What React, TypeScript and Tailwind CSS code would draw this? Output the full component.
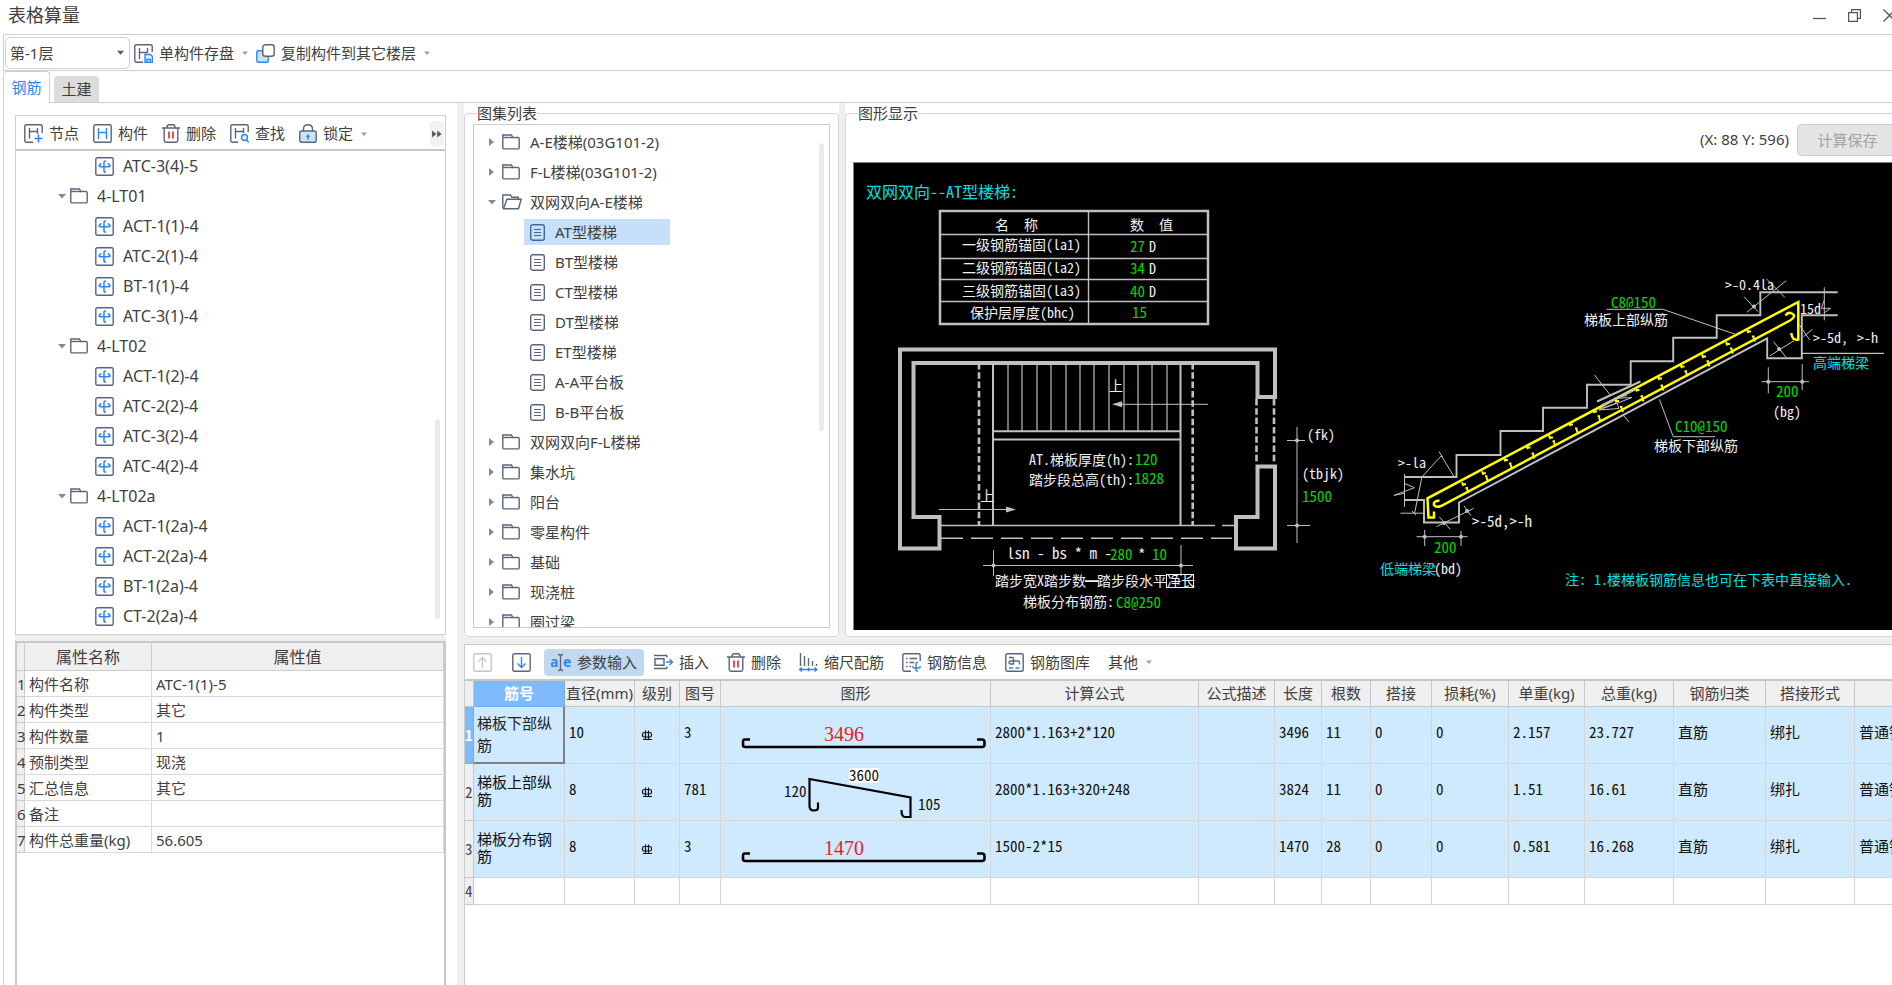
import React from "react";

const SLATE = "#5b6478";
const BLUE = "#2f86ea";

type TreeNode = { label: string; folder: boolean };

const COMPONENT_TREE: TreeNode[] = [
  { label: "ATC-3(4)-5", folder: false },
  { label: "4-LT01", folder: true },
  { label: "ACT-1(1)-4", folder: false },
  { label: "ATC-2(1)-4", folder: false },
  { label: "BT-1(1)-4", folder: false },
  { label: "ATC-3(1)-4", folder: false },
  { label: "4-LT02", folder: true },
  { label: "ACT-1(2)-4", folder: false },
  { label: "ATC-2(2)-4", folder: false },
  { label: "ATC-3(2)-4", folder: false },
  { label: "ATC-4(2)-4", folder: false },
  { label: "4-LT02a", folder: true },
  { label: "ACT-1(2a)-4", folder: false },
  { label: "ACT-2(2a)-4", folder: false },
  { label: "BT-1(2a)-4", folder: false },
  { label: "CT-2(2a)-4", folder: false },
];

type AtlasNode = { label: string; kind: "closed" | "open" | "leaf"; selected?: boolean };

const ATLAS: AtlasNode[] = [
  { label: "A-E楼梯(03G101-2)", kind: "closed" },
  { label: "F-L楼梯(03G101-2)", kind: "closed" },
  { label: "双网双向A-E楼梯", kind: "open" },
  { label: "AT型楼梯", kind: "leaf", selected: true },
  { label: "BT型楼梯", kind: "leaf" },
  { label: "CT型楼梯", kind: "leaf" },
  { label: "DT型楼梯", kind: "leaf" },
  { label: "ET型楼梯", kind: "leaf" },
  { label: "A-A平台板", kind: "leaf" },
  { label: "B-B平台板", kind: "leaf" },
  { label: "双网双向F-L楼梯", kind: "closed" },
  { label: "集水坑", kind: "closed" },
  { label: "阳台", kind: "closed" },
  { label: "零星构件", kind: "closed" },
  { label: "基础", kind: "closed" },
  { label: "现浇桩", kind: "closed" },
  { label: "圈过梁", kind: "closed" },
];

const PROPERTIES: [string, string][] = [
  ["构件名称", "ATC-1(1)-5"],
  ["构件类型", "其它"],
  ["构件数量", "1"],
  ["预制类型", "现浇"],
  ["汇总信息", "其它"],
  ["备注", ""],
  ["构件总重量(kg)", "56.605"],
];

/* ---------- icons ---------- */

function Caret({ dir = "down", color = "#8a8a8a", size = 8 }: { dir?: "down" | "right"; color?: string; size?: number }) {
  return (
    <svg width={size} height={size} viewBox="0 0 8 8" fill={color} className="shrink-0">
      {dir === "down" ? <path d="M0 2h8L4 6.5z" /> : <path d="M1 0v8l5-4z" />}
    </svg>
  );
}

function Icon({ children, w = 19 }: { children: React.ReactNode; w?: number }) {
  return (
    <svg width={w} height="19" viewBox={`0 0 ${w} 19`} fill="none" stroke={SLATE} strokeWidth="1.4" className="shrink-0">
      {children}
    </svg>
  );
}

const SaveIcon = () => (
  <Icon>
    <path d="M18.200 8V2.200Q18.200.8 16.800.8H2.200Q.8.8.8 2.200v14.600q0 1.400 1.400 1.400H9" />
    <path d="M5.500 4v11M13.500 4v5M5.500 8.500h8" />
    <path d="M11 10.500h5.500l2 2v6H11z" fill="#e3effc" stroke={BLUE} />
    <path d="M13 18v-2.500h3.500V18" stroke={BLUE} />
  </Icon>
);

const CopyIcon = () => (
  <Icon>
    <rect x="0.800" y="6.800" width="11.500" height="11.400" rx="1.500" fill="#c9e0fb" stroke={BLUE} />
    <rect x="6.800" y="0.800" width="11.400" height="11.400" rx="2.500" fill="#fff" />
  </Icon>
);

const NodeIcon = () => (
  <Icon>
    <path d="M18.200 9V2.200Q18.200.8 16.800.8H2.200Q.8.8.8 2.200v14.600q0 1.400 1.400 1.400H9" />
    <path d="M5.500 4v10.500M13.500 4v6M5.500 7.500h8" />
    <path d="M14.500 10.500v8M10.500 14.500h8" stroke={BLUE} strokeWidth="1.600" />
  </Icon>
);

const MemberIcon = () => (
  <Icon>
    <rect x="0.800" y="0.800" width="17.400" height="17.400" rx="1.500" />
    <path d="M5.500 4v11M13.500 4v11M5.500 8.500h8" stroke={BLUE} />
  </Icon>
);

const TrashIcon = () => (
  <Icon w={18}>
    <path d="M0 4h18M5 3.500Q5 .8 7 .8h4q2 0 2 2.700M2.200 4v12.500q0 1.700 1.700 1.700h10.200q1.700 0 1.700-1.700V4" />
    <path d="M7 7.500v7M11 7.500v7" stroke="#e5252b" strokeWidth="1.600" />
  </Icon>
);

const FindIcon = () => (
  <Icon>
    <path d="M18.200 8V2.200Q18.200.8 16.800.8H2.200Q.8.8.8 2.200v14.600q0 1.400 1.400 1.400H8" />
    <path d="M5.500 4v10.500M13.500 4v5M5.500 7.500h8" />
    <circle cx="14.500" cy="13.500" r="3" fill="#e3effc" stroke={BLUE} />
    <path d="M16.500 16l2.300 2.500" stroke={BLUE} />
  </Icon>
);

const LockIcon = () => (
  <Icon w={18}>
    <path d="M4.500 7V5Q4.500.8 9 .8T13.500 5v2" />
    <rect x="0.800" y="7" width="16.400" height="11.200" rx="1.500" fill="#cfe2fb" />
    <path d="M9 10l2.200 3H9.800v2.500H8.200V13H6.800z" fill={BLUE} stroke="none" />
  </Icon>
);

const ComponentIcon = () => (
  <Icon>
    <rect x="0.800" y="0.800" width="17.400" height="17.400" rx="1.500" />
    <path
      d="M11 4.300Q9 3.300 9 5.500V14q0 1.600 2 .8M4.500 7.800q-1.200 2 .8 2h8.400q2 0 .8-2.300M6.300 6.500Q4.300 7.300 4.600 9M12.800 6.500q1.900.8 1.700 2.500"
      stroke={BLUE}
      strokeWidth="1.500"
    />
  </Icon>
);

const FolderIcon = () => (
  <svg width="18" height="16" viewBox="0 0 18 16" fill="none" stroke={SLATE} strokeWidth="1.400" className="shrink-0">
    <path d="M.8 1h8.700l1.200 2.500H16q1.200 0 1.200 1.200v9q0 1.200-1.200 1.200H2Q.8 14.900.8 13.700z" />
    <path d="M1 3.500h10" />
  </svg>
);

const FolderOpenIcon = () => (
  <svg width="20" height="16" viewBox="0 0 20 16" fill="none" stroke={SLATE} strokeWidth="1.400" className="shrink-0">
    <path d="M1.500 14.500L.8 13V1h7.500l1.700 2.300h6.200v2" />
    <path d="M5 5.300h14.200l-2.700 9.500H1.500z" />
  </svg>
);

const DocIcon = ({ active }: { active?: boolean }) => (
  <svg width="15" height="17" viewBox="0 0 15 17" fill="none" stroke={active ? "#3d6a9c" : SLATE} strokeWidth="1.400" className="shrink-0">
    <rect x="0.700" y="0.800" width="13.600" height="15.400" rx="2" />
    <path d="M4 5.500h7M4 8.500h7M4 11.500h7" strokeWidth="1.200" />
  </svg>
);

/* ---------- shared pieces ---------- */

function ToolButton({ icon, label, caret, active }: { icon?: React.ReactNode; label: string; caret?: boolean; active?: boolean }) {
  return (
    <button
      type="button"
      className={
        active
          ? "flex h-[27px] items-center gap-1.5 rounded bg-[#c1d8f1] px-[7px] whitespace-nowrap"
          : "flex h-[27px] items-center gap-1.5 whitespace-nowrap"
      }
    >
      {icon}
      <span>{label}</span>
      {caret && (
        <span className="ml-0.5">
          <Caret color="#a0a0a0" size={6} />
        </span>
      )}
    </button>
  );
}

function ComponentPanel() {
  return (
    <section className="relative h-[520px] shrink-0 overflow-hidden border border-[#cdcfd0] bg-white">
      <div className="flex h-[35px] items-center border-b-2 border-[#c4c7c8] pt-0.5 pl-2">
        <div className="flex gap-[14px]">
          <ToolButton icon={<NodeIcon />} label="节点" />
          <ToolButton icon={<MemberIcon />} label="构件" />
          <ToolButton icon={<TrashIcon />} label="删除" />
          <ToolButton icon={<FindIcon />} label="查找" />
          <ToolButton icon={<LockIcon />} label="锁定" caret />
        </div>
        <button type="button" aria-label="更多" className="mr-px ml-auto flex h-[25px] w-[14px] items-center justify-center rounded bg-[#f2f2f2]">
          <svg width="10" height="8" viewBox="0 0 10 8" fill="#555b68">
            <path d="M0 .5v7L4.500 4zM5.200.5v7L9.700 4z" />
          </svg>
        </button>
      </div>
      <ul className="text-[16px]">
        {COMPONENT_TREE.map((n) => (
          <li key={n.label}>
            <button
              type="button"
              className={n.folder ? "flex h-[30px] w-full items-center pl-[42px]" : "flex h-[30px] w-full items-center pl-[79px]"}
            >
              {n.folder ? (
                <>
                  <Caret />
                  <span className="mr-[9px] ml-1">
                    <FolderIcon />
                  </span>
                </>
              ) : (
                <span className="mr-[9px]">
                  <ComponentIcon />
                </span>
              )}
              <span>{n.label}</span>
            </button>
          </li>
        ))}
      </ul>
      <div className="absolute top-[303px] right-[5px] h-[200px] w-[5px] rounded-full bg-[#ebebeb]" />
    </section>
  );
}

function PropertyPanel() {
  return (
    <section className="min-h-0 flex-1 border-2 border-b-0 border-[#c6c8ca] bg-white">
      <table className="w-full table-fixed border-separate border-spacing-0">
        <colgroup>
          <col className="w-[8px]" />
          <col className="w-[127px]" />
          <col />
        </colgroup>
        <thead>
          <tr className="h-[28px] bg-[#efefef] text-[16px] leading-6">
            <th className="border-r border-b border-[#c9cbcd] p-0" />
            <th className="border-r border-b border-[#c9cbcd] p-0 font-normal">属性名称</th>
            <th className="border-r border-b border-[#c9cbcd] p-0 font-normal">属性值</th>
          </tr>
        </thead>
        <tbody>
          {PROPERTIES.map(([name, value], i) => (
            <tr key={name} className="h-[26px] leading-6">
              <th className="border-r border-b border-[#c9cbcd] bg-[#efefef] p-0 text-left font-normal">{i + 1}</th>
              <td className="border-r border-b border-[#d9d9d9] p-0 pl-1">{name}</td>
              <td className="border-r border-b border-[#d9d9d9] p-0 pl-1">{value}</td>
            </tr>
          ))}
        </tbody>
      </table>
    </section>
  );
}

function AtlasPanel() {
  return (
    <section className="flex w-[375px] shrink-0 flex-col bg-white">
      <fieldset className="flex min-h-0 min-w-0 flex-1 flex-col rounded border border-[#d4d6d8] px-2 pb-2">
        <legend className="ml-1 leading-[21px]">图集列表</legend>
        <div className="relative h-[504px] overflow-hidden border border-[#c9cbcd] pt-[2px]">
          <ul>
            {ATLAS.map((n) => (
              <li key={n.label} className="flex h-[30px] items-center">
                {n.kind === "leaf" ? (
                  <button
                    type="button"
                    className={
                      n.selected
                        ? "ml-[50px] flex h-[26px] w-[146px] items-center gap-[10px] bg-[#c7dff9] pl-[6px]"
                        : "ml-[50px] flex h-[26px] w-[146px] items-center gap-[10px] pl-[6px]"
                    }
                  >
                    <DocIcon active={n.selected} />
                    <span>{n.label}</span>
                  </button>
                ) : (
                  <button type="button" className="ml-[14px] flex h-[26px] items-center">
                    <Caret dir={n.kind === "open" ? "down" : "right"} />
                    <span className="mr-2 ml-[6px] w-5">{n.kind === "open" ? <FolderOpenIcon /> : <FolderIcon />}</span>
                    <span>{n.label}</span>
                  </button>
                )}
              </li>
            ))}
          </ul>
          <div className="absolute top-[18px] right-[5px] h-[288px] w-[5px] rounded-full bg-[#ebebeb]" />
        </div>
      </fieldset>
    </section>
  );
}

/* ---------- CAD drawing ---------- */

type CadTextProps = { x: number; y: number; size?: number; fill?: string; children: React.ReactNode };

function T({ x, y, size = 14, fill = "#f0f0f0", children }: CadTextProps) {
  return (
    <text x={x} y={y} fontSize={size} fill={fill}>
      {children}
    </text>
  );
}

function G(props: CadTextProps) {
  return <T size={15} fill="#00d800" {...props} />;
}

const TREADS = [1008, 1022, 1037, 1051, 1066, 1080, 1094, 1109, 1124, 1138, 1152, 1167];

const TOP_DOTS = [
  [1464, 484.300], [1484, 473.300], [1506, 460], [1528.500, 447.500], [1551, 437.500], [1571, 424.500], [1595, 411.500],
  [1617, 401], [1637.500, 390], [1660, 378.500], [1682.500, 366.500], [1704, 356.500], [1728, 344], [1749, 331.500],
];

const BOTTOM_DOTS = [
  [1467, 490], [1486.500, 478.300], [1510.500, 465.500], [1533, 455.500], [1554, 443.300], [1576.500, 430.500], [1599, 418.300],
  [1621.500, 409], [1642, 398.300], [1662, 387.500], [1686, 373.300], [1708, 363.300], [1731.500, 350.500], [1753.500, 338.500],
];

function Drawing() {
  return (
    <svg
      width="1040"
      height="467"
      viewBox="854 163 1040 467"
      fill="none"
      stroke="#c0c0c0"
      className="shrink-0 [font-family:'Noto_Sans_CJK_SC',sans-serif] [font-feature-settings:'hwid']"
    >
      {/* parameter table */}
      <rect x="940" y="211" width="268" height="113" strokeWidth="2.500" />
      <path d="M1088.500 211v113M940 234.500h268M940 258.500h268M940 279.500h268M940 301.500h268" strokeWidth="1.400" />

      {/* plan: walls */}
      <g strokeWidth="4">
        <path d="M900 548.500V349.500H1275V397H1257.500V363H913.500V517H939.500V548.500z" />
        <path d="M1275 466.500V548.500H1236V517H1257.500V466.500z" />
      </g>
      <path d="M1256.500 399v65M1274 399v65M979 363v162M1192.700 363v162" strokeWidth="2.600" strokeDasharray="6.500 2.800" />

      {/* plan: flights */}
      <path d="M993 363v162M1180.500 363v162M993 431.300h187.500M993 439.500h187.500" strokeWidth="2" />
      {TREADS.map((x) => (
        <path key={x} d={`M${x} 364v67`} strokeWidth="1.200" />
      ))}
      <path d="M1208 404.300h-90M939 509.500h70" />
      <path d="M1112 404.300l10-3v6zM1016 509.500l-10-3v6z" fill="#c0c0c0" stroke="none" />
      <path d="M941 525.500h274M1222 525.500h14" strokeWidth="1.400" />
      <path d="M941 538.300h291" strokeWidth="1.400" strokeDasharray="22 8" />

      {/* plan: dimensions */}
      <path d="M1297 427v116M1287 440.500h18M1287 525.500h23" />
      <path d="M983 565.500h210M993.500 550v26M1181 545v31" />
      <g fill="#c0c0c0" stroke="none">
        <circle cx="1297" cy="440.500" r="2" />
        <circle cx="1297" cy="525.500" r="2" />
        <circle cx="993.500" cy="565.500" r="2" />
        <circle cx="1181" cy="565.500" r="2" />
      </g>
      <rect x="1166.500" y="574.500" width="27" height="13" stroke="#f0f0f0" />

      {/* section: concrete outline */}
      <g strokeWidth="1.900">
        <path d="M1404.500 477H1456.500V455H1500.500V431H1543V407.700H1587V384.700H1630.700V361.300H1673.200V337.700H1716.700V315.300H1760.300V292.300H1837.700" />
        <path d="M1404.500 500H1424V522.500H1459V502.500L1767.200 338.300V358.300H1801.800V315.300H1837.700" />
      </g>

      {/* section: reinforcement */}
      <g stroke="#ffff00" strokeWidth="2.500">
        <path d="M1434 511.500V517.500H1428.500L1427.500 498.300L1798.300 302V339.500Q1792 341 1791.300 333" />
        <path d="M1439.500 500.500Q1433 501 1434 505Q1436 508 1441 506L1790 320.500Q1797 316 1792 313.500Q1788 311.500 1785.500 315.500" />
        {TOP_DOTS.map(([x, y]) => (
          <path key={x} d={`M${x - 2} ${y - 2}l1.500 3.500M${x - 1} ${y}h3`} strokeWidth="2" />
        ))}
        {BOTTOM_DOTS.map(([x, y]) => (
          <path key={x} d={`M${x - 1.5} ${y - 2}h2.500M${x} ${y - 1}l1.500 4`} strokeWidth="2" />
        ))}
      </g>

      {/* section: leaders and marks */}
      <path d="M1597 401.500L1640.500 381.500M1601 406L1636 389" strokeWidth="2" />
      <path d="M1594.500 375L1611 396M1599 409l18-6 2 5.500-20 1.500 33-12.500-18 1 13-3M1623 415l6 7" />
      <path d="M1659.500 399.500L1673.200 436.700H1715" />
      <path d="M1606.500 309.300H1662.800L1736 334.500" />
      <path d="M1404.500 474v33M1404.500 483.500l10 4.200-20.300 7.600 10.300-2" />
      <path d="M1453.700 476l-12.400-20.300-19.400 21.300-7.300 36.300M1439 451.500l4 6.500M1400.500 513.200h23M1412 511l4 4" />
      <path d="M1464 505.700l7 10M1436.500 526.700l37.200-18.400M1439.200 516.700l11 12.600" />
      <path d="M1744 296.700l14 15M1746.800 312.300l39.400-31.600M1766.500 279l18.300 18.300" />
      <path d="M1824.300 287.300v33M1824.300 300l-3 8.300h9.300l-6.300 4.500" />
      <path d="M1799.500 325l10.200 15M1803.500 336.700l9-7.400M1770 355.700l24-15M1773.500 341.700l12.700 15.600" />
      <path d="M1802 353.400h82" strokeWidth="1.300" />
      <path d="M1768.300 367.300v26M1802.200 364v26M1761.500 381.700H1809" />
      <path d="M1424.700 530v16M1461 531v15M1416.500 536.700h51" />
      <g fill="#c0c0c0" stroke="none">
        <circle cx="1768.300" cy="381.700" r="2" />
        <circle cx="1802.200" cy="381.700" r="2" />
        <circle cx="1424.700" cy="536.700" r="2" />
        <circle cx="1461" cy="536.700" r="2" />
        <circle cx="1754" cy="306.500" r="2" />
        <circle cx="1779" cy="349" r="2" />
        <circle cx="1444" cy="523" r="2" />
        <circle cx="1467" cy="511" r="2" />
      </g>

      <g stroke="none">
        <T x={866} y={198} size={16} fill="#00e0e0">双网双向--AT型楼梯:</T>
        <T x={995} y={230}>名</T>
        <T x={1024} y={230}>称</T>
        <T x={1130} y={230}>数</T>
        <T x={1159} y={230}>值</T>
        <T x={962} y={250}>一级钢筋锚固(la1)</T>
        <T x={962} y={273}>二级钢筋锚固(la2)</T>
        <T x={962} y={296}>三级钢筋锚固(la3)</T>
        <T x={970} y={318}>保护层厚度(bhc)</T>
        <G x={1130} y={252}>27</G>
        <G x={1130} y={274}>34</G>
        <G x={1130} y={297}>40</G>
        <G x={1132} y={318}>15</G>
        <T x={1149} y={252}>D</T>
        <T x={1149} y={274}>D</T>
        <T x={1149} y={297}>D</T>

        <T x={1109} y={391}>上</T>
        <T x={980} y={501}>上</T>
        <T x={1029} y={465}>AT.梯板厚度(h):</T>
        <G x={1135} y={465}>120</G>
        <T x={1029} y={485}>踏步段总高(th):</T>
        <G x={1134} y={484}>1828</G>
        <T x={1007} y={559} size={15}>lsn - bs * m -</T>
        <G x={1110} y={560}>280</G>
        <T x={1138} y={560} size={15}>*</T>
        <G x={1152} y={560}>10</G>
        <T x={995} y={586}>踏步宽X踏步数</T>
        <T x={1085} y={586}>━</T>
        <T x={1097} y={586}>踏步段水平净长</T>
        <T x={1023} y={607}>梯板分布钢筋:</T>
        <G x={1116} y={608}>C8@250</G>
        <T x={1307} y={440}>(fk)</T>
        <T x={1302} y={479}>(tbjk)</T>
        <G x={1302} y={502}>1500</G>

        <G x={1611} y={308}>C8@150</G>
        <T x={1584} y={325}>梯板上部纵筋</T>
        <T x={1725} y={290}>&gt;-0.4la</T>
        <T x={1800} y={314}>15d</T>
        <T x={1813} y={343}>&gt;-5d,</T>
        <T x={1857} y={343}>&gt;-h</T>
        <T x={1813} y={368} fill="#00e0e0">高端梯梁</T>
        <G x={1776} y={397}>200</G>
        <T x={1773} y={417}>(bg)</T>
        <G x={1675} y={432}>C10@150</G>
        <T x={1654} y={451}>梯板下部纵筋</T>
        <T x={1398} y={468}>&gt;-la</T>
        <T x={1472} y={527} size={15}>&gt;-5d,&gt;-h</T>
        <G x={1434} y={553}>200</G>
        <T x={1380} y={574} fill="#00e0e0">低端梯梁</T>
        <T x={1434} y={574}>(bd)</T>
        <T x={1565} y={585} fill="#00e0e0">注:</T>
        <T x={1594} y={585} fill="#00e0e0">1.</T>
        <T x={1607} y={585} fill="#00e0e0">楼梯板钢筋信息也可在下表中直接输入.</T>
      </g>
    </svg>
  );
}

function DrawingPanel() {
  return (
    <section className="flex min-w-0 flex-1 flex-col overflow-hidden bg-white">
      <fieldset className="flex min-h-0 min-w-0 flex-1 flex-col rounded-l border border-r-0 border-[#d4d6d8] pb-[6px] pl-[7px]">
        <legend className="ml-[5px] leading-[21px]">图形显示</legend>
        <div className="flex h-[38px] shrink-0 items-start justify-end gap-[8px] overflow-hidden">
          <output className="leading-[30px] whitespace-nowrap">(X: 88 Y: 596)</output>
          <button
            type="button"
            disabled
            className="-mr-1.5 h-[32px] w-[101px] shrink-0 rounded border border-[#c9cfdd] bg-[#e4e4e4] text-[#a3a3a3]"
          >
            计算保存
          </button>
        </div>
        <div className="flex min-h-0 flex-1 overflow-hidden border-t border-l border-[#808080] bg-black">
          <Drawing />
        </div>
      </fieldset>
    </section>
  );
}

/* ---------- rebar table ---------- */

const UpIcon = () => (
  <svg width="19" height="19" viewBox="0 0 19 19" fill="none" stroke="#c4c6ca" strokeWidth="1.400">
    <rect x="0.800" y="0.800" width="17.400" height="17.400" rx="1.500" />
    <path d="M9.500 15V4.500M5.500 8.500l4-4 4 4" />
  </svg>
);

const DownIcon = () => (
  <Icon>
    <rect x="0.800" y="0.800" width="17.400" height="17.400" rx="1.500" />
    <path d="M9.500 4v10.500M5.500 10.500l4 4 4-4" stroke={BLUE} />
  </Icon>
);

const ParamIcon = () => (
  <svg width="20" height="19" viewBox="0 0 20 19" fill="none" className="shrink-0">
    <text x="-1" y="14" fontSize="14" fontWeight="700" fill={BLUE} fontFamily="Noto Sans, sans-serif">a</text>
    <text x="12" y="14" fontSize="14" fontWeight="700" fill={BLUE} fontFamily="Noto Sans, sans-serif">e</text>
    <path d="M7 1.500q2.500 0 2.500 2v12q0 2-2.500 2M12 1.500q-2.500 0-2.500 2M12 17.500q-2.500 0-2.500-2" stroke={SLATE} strokeWidth="1.300" />
  </svg>
);

const InsertIcon = () => (
  <Icon>
    <path d="M0 2.500h13M0 15.500h13M13 2.500v2M13 13.500v2M1 5.700h9v6.600H1z" />
    <path d="M12 9h6.500M15.500 6l3 3-3 3" stroke={BLUE} />
  </Icon>
);

const ScaleIcon = () => (
  <Icon>
    <path d="M1.500 0v13M5.500 3v10M9.500 5v8M13.500 8v5M17.500 11v2" />
    <path d="M.5 16.500h17M3 14.500l-2.500 2 2.500 2M15.500 14.500l2.500 2-2.500 2M9.500 14.500v4" stroke={BLUE} />
  </Icon>
);

const InfoIcon = () => (
  <Icon>
    <path d="M18.200 8V2.200Q18.200.8 16.800.8H2.200Q.8.8.8 2.200v14.600q0 1.400 1.400 1.400H9" />
    <path d="M4 5.500h1.500M7.500 5.500H15M4 9.500h1.500M7.500 9.500H12M4 13.500h1.500M7.500 13.500H9" />
    <path d="M16 9.500q-2-.5-2 1.500v5.500q0 2 2 1.500M11 13q-.5 2 1 2h5q1.500 0 1-2" stroke={BLUE} />
  </Icon>
);

const LibraryIcon = () => (
  <Icon>
    <rect x="0.800" y="0.800" width="17.400" height="17.400" rx="1.500" />
    <path d="M4 4.500h3Q8.500 4.500 8.500 6v5H5.500Q4 11 4 9.500T5.500 8h7.500q1.500 0 1.500 1.500v2" strokeWidth="1.300" />
    <path d="M4 15h4M10.500 15h4" stroke={BLUE} strokeWidth="1.600" />
  </Icon>
);

const GradeSymbol = () => (
  <svg width="12" height="12" viewBox="0 0 12 12" fill="none" stroke="#111" strokeWidth="1.200" role="img" aria-label="HRB400">
    <rect x="1.500" y="3.500" width="9" height="4.500" rx="1.800" />
    <path d="M4.500 1.500v9.500M7.500 1.500v9.500M2 10.500h9" />
  </svg>
);

function StraightShape({ length }: { length: string }) {
  return (
    <svg width="269" height="56" viewBox="0 0 269 56" fill="none" stroke="#000" strokeWidth="2.600" className="block">
      <path d="M29 32.500H23.500Q22 32.500 22 35V38Q22 40 24.500 40H261Q263.500 40 263.500 37.500V35Q263.500 32.500 261 32.500H256" />
      <text x="103" y="34" fontSize="20" fill="#ee1c24" stroke="none" fontFamily="Liberation Serif, serif">
        {length}
      </text>
    </svg>
  );
}

function BentShape() {
  return (
    <svg
      width="269"
      height="56"
      viewBox="0 0 269 56"
      fill="none"
      stroke="#000"
      strokeWidth="2.200"
      className="block [font-family:'Noto_Sans_CJK_SC',sans-serif] [font-feature-settings:'hwid']"
    >
      <path d="M97 38.500V44Q97 46.500 93 46.500Q88.500 46.500 88.500 42V15L189.500 33.500V53H184Q180.500 53 180.500 46" />
      <rect x="128" y="4" width="30" height="15" fill="#fff" stroke="none" />
      <g stroke="none" fill="#111" fontSize="15">
        <text x="128" y="17">3600</text>
        <text x="63" y="33">120</text>
        <text x="197" y="46">105</text>
      </g>
    </svg>
  );
}

const HEADERS = [
  "直径(mm)", "级别", "图号", "图形", "计算公式", "公式描述", "长度", "根数",
  "搭接", "损耗(%)", "单重(kg)", "总重(kg)", "钢筋归类", "搭接形式", "",
];

type Bar = {
  name: string;
  dia: string;
  shapeNo: string;
  shape: React.ReactNode;
  rest: string[];
};

const BARS: Bar[] = [
  {
    name: "梯板下部纵筋",
    dia: "10",
    shapeNo: "3",
    shape: <StraightShape length="3496" />,
    rest: ["2800*1.163+2*120", "", "3496", "11", "0", "0", "2.157", "23.727", "直筋", "绑扎", "普通钢筋"],
  },
  {
    name: "梯板上部纵筋",
    dia: "8",
    shapeNo: "781",
    shape: <BentShape />,
    rest: ["2800*1.163+320+248", "", "3824", "11", "0", "0", "1.51", "16.61", "直筋", "绑扎", "普通钢筋"],
  },
  {
    name: "梯板分布钢筋",
    dia: "8",
    shapeNo: "3",
    shape: <StraightShape length="1470" />,
    rest: ["1500-2*15", "", "1470", "28", "0", "0", "0.581", "16.268", "直筋", "绑扎", "普通钢筋"],
  },
];

const HEAD_CELL = "overflow-hidden border-r border-b border-[#c4c6c8] p-0 pb-0.5 text-center font-normal whitespace-nowrap";
const CELL = "overflow-hidden border-r border-b border-[#d6d6d6] p-0 pb-1.5 pl-1 text-left whitespace-nowrap";

function RebarTable() {
  return (
    <table className="w-[1490px] table-fixed border-separate border-spacing-0">
      <colgroup>
        <col className="w-[9px]" />
        <col className="w-[91px]" />
        <col className="w-[70px]" />
        <col className="w-[45px]" />
        <col className="w-[41px]" />
        <col className="w-[270px]" />
        <col className="w-[208px]" />
        <col className="w-[76px]" />
        <col className="w-[47px]" />
        <col className="w-[49px]" />
        <col className="w-[61px]" />
        <col className="w-[77px]" />
        <col className="w-[76px]" />
        <col className="w-[89px]" />
        <col className="w-[92px]" />
        <col className="w-[89px]" />
        <col className="w-[100px]" />
      </colgroup>
      <thead>
        <tr className="h-[26px] bg-[#efefef] leading-[22px]">
          <th className={HEAD_CELL} />
          <th className="border-r border-b border-[#70aef0] bg-[#7fbafb] p-0 pb-0.5 text-center font-bold text-white">筋号</th>
          {HEADERS.map((h, i) => (
            <th key={i} className={HEAD_CELL}>
              {h}
            </th>
          ))}
        </tr>
      </thead>
      <tbody className="text-[#111] [font-family:'Noto_Sans_CJK_SC',sans-serif] [font-feature-settings:'hwid']">
        {BARS.map((b, i) => (
          <tr key={b.name} className="h-[57px] bg-[#cfe9ff]">
            <th
              className={
                i === 0
                  ? "border-r border-b border-[#70aef0] bg-[#7fbafb] p-0 text-left font-bold text-white"
                  : "border-r border-b border-[#c4c6c8] bg-[#efefef] p-0 text-left font-normal text-[#444]"
              }
            >
              {i + 1}
            </th>
            <td
              className={
                i === 0
                  ? "border-r-2 border-b-2 border-[#808080] p-0 pr-1 pb-0.5 pl-[3px] leading-[22px] text-[#222]"
                  : "border-r border-b border-[#d6d6d6] p-0 pr-1 pb-1 pl-[3px] leading-[17px]"
              }
            >
              {b.name}
            </td>
            <td className={CELL}>{b.dia}</td>
            <td className="border-r border-b border-[#d6d6d6] p-0 pl-[6px]">
              <GradeSymbol />
            </td>
            <td className={CELL}>{b.shapeNo}</td>
            <td className="border-r border-b border-[#d6d6d6] p-0">{b.shape}</td>
            {b.rest.map((v, j) => (
              <td key={j} className={CELL}>
                {v}
              </td>
            ))}
          </tr>
        ))}
        <tr className="h-[27px]">
          <th className="border-r border-b border-[#c4c6c8] bg-[#efefef] p-0 text-left font-normal text-[#444]">4</th>
          {Array.from({ length: 16 }, (_, i) => (
            <td key={i} className="border-r border-b border-[#d6d6d6] p-0" />
          ))}
        </tr>
      </tbody>
    </table>
  );
}

function RebarPanel() {
  return (
    <section className="flex min-h-0 flex-1 flex-col overflow-hidden border-t border-l border-[#c9cbcd] bg-white">
      <div className="flex h-[36px] shrink-0 items-center border-b-2 border-[#c4c7c8] pl-2">
        <button type="button" aria-label="上移" disabled>
          <UpIcon />
        </button>
        <button type="button" aria-label="下移" className="ml-5">
          <DownIcon />
        </button>
        <div className="ml-[13px] flex items-center">
          <ToolButton icon={<ParamIcon />} label="参数输入" active />
          <div className="ml-[10px] flex items-center gap-[18px]">
            <ToolButton icon={<InsertIcon />} label="插入" />
            <ToolButton icon={<TrashIcon />} label="删除" />
            <ToolButton icon={<ScaleIcon />} label="缩尺配筋" />
            <ToolButton icon={<InfoIcon />} label="钢筋信息" />
            <ToolButton icon={<LibraryIcon />} label="钢筋图库" />
            <ToolButton label="其他" caret />
          </div>
        </div>
      </div>
      <div className="min-h-0 flex-1 overflow-hidden">
        <RebarTable />
      </div>
    </section>
  );
}

/* ---------- page ---------- */

export default function App() {
  return (
    <div className="flex h-screen flex-col overflow-hidden bg-white text-[15px] text-[#404040] [font-family:'Noto_Sans','Noto_Sans_CJK_SC',sans-serif]">
      <header className="flex h-[34px] shrink-0 items-center justify-between overflow-hidden pb-1 pl-2">
        <h1 className="text-[18px] leading-7">表格算量</h1>
        <div className="-mr-1 flex items-center gap-[22px]">
          <button type="button" aria-label="最小化">
            <svg width="13" height="13" viewBox="0 0 13 13" stroke="#555" strokeWidth="1.300">
              <path d="M0 9.500h13" />
            </svg>
          </button>
          <button type="button" aria-label="还原">
            <svg width="13" height="13" viewBox="0 0 13 13" fill="none" stroke="#555" strokeWidth="1.200">
              <path d="M.6 3.600h8.800v8.800H.6zM3.600 3.600v-3h8.800v8.800h-3" />
            </svg>
          </button>
          <button type="button" aria-label="关闭">
            <svg width="13" height="13" viewBox="0 0 13 13" stroke="#555" strokeWidth="1.300">
              <path d="M.5.5l12 12M12.500.5l-12 12" />
            </svg>
          </button>
        </div>
      </header>

      <div className="ml-[3px] flex h-[37px] shrink-0 items-center border-y border-l border-[#cdcfd0] pt-px pl-px">
        <label className="relative block">
          <span className="sr-only">楼层</span>
          <select className="h-[32px] w-[125px] appearance-none rounded-[5px] border border-[#cfd1d4] bg-white pl-1 outline-none">
            <option>第-1层</option>
          </select>
          <span className="pointer-events-none absolute top-[12px] right-[6px] flex">
            <Caret color="#555b68" size={7} />
          </span>
        </label>
        <div className="ml-[4px] flex items-center gap-[8px]">
          <ToolButton icon={<SaveIcon />} label="单构件存盘" caret />
          <ToolButton icon={<CopyIcon />} label="复制构件到其它楼层" caret />
        </div>
      </div>

      <div className="ml-[3px] flex h-[32px] shrink-0 items-end" role="tablist">
        <button
          type="button"
          role="tab"
          aria-selected="true"
          className="h-[32px] w-[47px] rounded-t border border-b-0 border-[#cdcfd0] bg-white text-[#2f86ea]"
        >
          钢筋
        </button>
        <span className="h-px w-[4px] bg-[#cdcfd0]" />
        <div className="flex flex-1 items-end border-b border-[#cdcfd0]">
          <button type="button" role="tab" aria-selected="false" className="h-[26px] w-[45px] rounded-t bg-[#dcdcdc]">
            土建
          </button>
        </div>
      </div>

      <main className="ml-[3px] flex min-h-0 flex-1 border-l border-[#cdcfd0]">
        <div className="flex w-[453px] shrink-0 flex-col pt-[12px] pr-[11px] pl-[11px]">
          <ComponentPanel />
          <div className="h-[6px] shrink-0 bg-[#efefef]" />
          <PropertyPanel />
        </div>
        <div className="flex min-w-0 flex-1 flex-col gap-[7px] bg-[#efefef] pl-[7px]">
          <div className="flex h-[534px] shrink-0 gap-[6px]">
            <AtlasPanel />
            <DrawingPanel />
          </div>
          <RebarPanel />
        </div>
      </main>
    </div>
  );
}
